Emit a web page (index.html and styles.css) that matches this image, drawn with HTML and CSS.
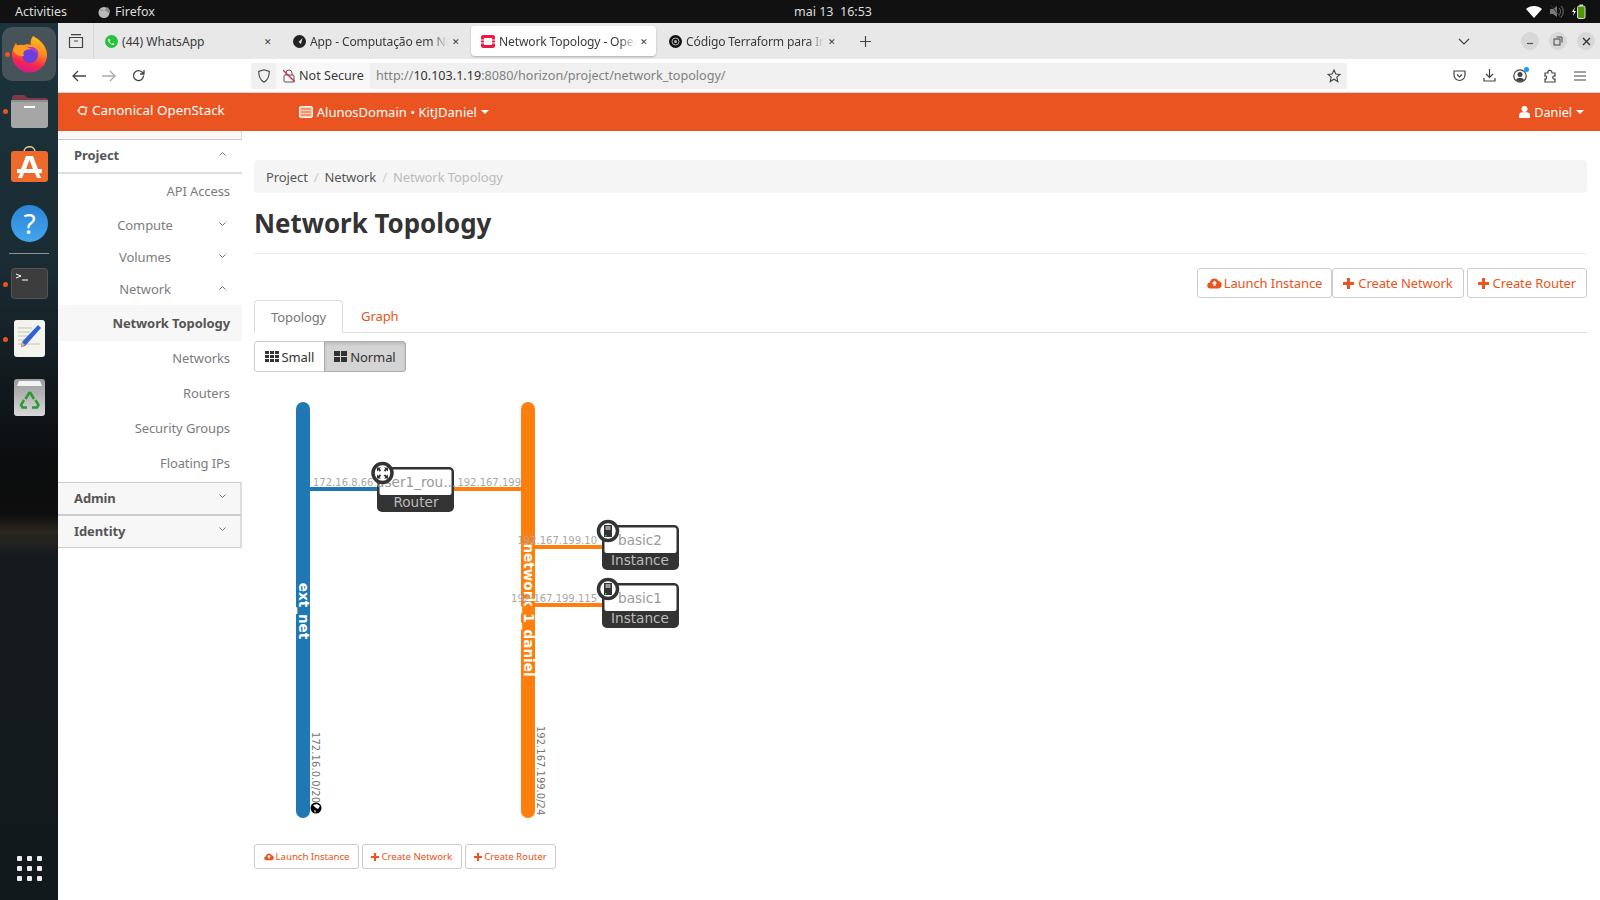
FILE: index.html
```html
<!DOCTYPE html>
<html>
<head>
<meta charset="utf-8">
<title>Network Topology - OpenStack Dashboard</title>
<link rel="stylesheet" href="styles.css">
</head>
<body>
<div class="topbar">
  <span class="activities">Activities</span>
  <span class="appname">
    <svg width="14" height="14" viewBox="0 0 14 14"><circle cx="7" cy="7.5" r="5.5" fill="#b9b9b9"/><path d="M3 3c1 2 3 3 5 2l2-3c2 1 3 3 3 5 0 1-1 1-2 1-1-2-3-3-5-2-2 0-3 0-3-3z" fill="#8d8d8d"/></svg>
    Firefox</span>
  <span class="clock">mai 13&nbsp;&nbsp;16:53</span>
  <span class="tray">
    <svg width="16" height="12" viewBox="0 0 16 12"><path d="M0 3C4-1 12-1 16 3L8 12z" fill="#fff"/></svg>
    <svg width="14" height="13" viewBox="0 0 14 13"><path d="M0 4h3l4-3v11L3 9H0z" fill="#777"/><path d="M9 3c2 2 2 5 0 7M11 1c3 3 3 8 0 11" fill="none" stroke="#777"/><path d="M1 0l10 13" stroke="#333"/></svg>
    <svg width="14" height="15" viewBox="0 0 14 15"><path d="M3 3L0 8h2l-1 4 3-5H2z" fill="#fff"/><rect x="5.500" y="2" width="7.500" height="12.500" rx="1.500" fill="#4e9a06" stroke="#ddd"/><rect x="7.500" y="0.500" width="3.500" height="1.500" fill="#ddd"/></svg>
  </span>
</div>

<div class="screen">
  <div class="dock">
    <div class="dock-item dock-active dot">
      <svg width="36" height="37" viewBox="0 0 36 37">
        <defs><linearGradient id="ffx" x1="0.700" y1="0" x2="0.400" y2="1"><stop offset="0" stop-color="#ffc21c"/><stop offset="0.400" stop-color="#ff8a1f"/><stop offset="0.750" stop-color="#f5274d"/><stop offset="1" stop-color="#d6188f"/></linearGradient></defs>
        <path d="M22 0C30 4 36 11 36 19A17.500 17.500 0 0 1 1 19C1 15 2 11 5 7C6 10 8 11 11 10C14 8 18 8 20 9C19 6 20 3 22 0z" fill="url(#ffx)"/>
        <circle cx="19" cy="19" r="8" fill="#6a3fdc"/>
        <path d="M12 15c3-4 8-5 12-3 3 2 4 4 3 7-2-4-7-6-11-5-2 0-3 1-4 1z" fill="#b33dc6"/>
        <path d="M2 14C5 8 10 8 14 10L20 13C14 13 11 16 13 20C8 21 4 18 2 14z" fill="#ff9a1f"/>
      </svg>
    </div>
    <div class="dock-item dock-files dot">
      <svg width="37" height="34" viewBox="0 0 37 34">
        <path d="M1 4c0-2 1-3 3-3h9l4 3h17c2 0 3 1 3 3v8H1z" fill="#7d3b4a"/>
        <rect x="0" y="6" width="37" height="28" rx="3" fill="#a6a6a6"/>
        <rect x="0" y="6" width="37" height="2" fill="#8e8e8e"/>
        <rect x="13" y="12" width="11" height="2" fill="#fff"/>
      </svg>
    </div>
    <div class="dock-item dock-store">
      <svg width="37" height="37" viewBox="0 0 37 37">
        <path d="M13 6c0-7 11-7 11 0" fill="none" stroke="#e8c9a0" stroke-width="1.500"/>
        <rect x="0" y="5" width="37" height="31" rx="3" fill="#ee6a2c"/>
        <path d="M15 10h7l5 13h4v4h-3l2 5h-4l-2-5H13l-2 5H7l2-5H6v-4h4zM18.500 14L15 23h7z" fill="#fff" fill-rule="evenodd"/>
      </svg>
    </div>
    <div class="dock-item dock-help">
      <svg width="37" height="37" viewBox="0 0 37 37">
        <defs><linearGradient id="hlp" x1="0" y1="0" x2="0" y2="1"><stop offset="0" stop-color="#2b84d6"/><stop offset="1" stop-color="#44a6ee"/></linearGradient></defs>
        <circle cx="18.500" cy="18.500" r="18.500" fill="url(#hlp)"/>
        <text x="18.500" y="29" text-anchor="middle" class="help-mark">?</text>
      </svg>
    </div>
    <div class="dock-sep"></div>
    <div class="dock-item dock-term dot">
      <svg width="37" height="31" viewBox="0 0 37 31">
        <rect x=".5" y=".5" width="36" height="30" rx="3" fill="#3d3d3d" stroke="#555"/>
        <path d="M5 6l5 2-5 2" fill="none" stroke="#fff"/><path d="M11 12h6" stroke="#fff"/>
      </svg>
    </div>
    <div class="dock-item dock-writer dot">
      <svg width="31" height="37" viewBox="0 0 31 37">
        <rect width="31" height="37" rx="3" fill="#f4f4ef"/>
        <path d="M4 8h14M4 12h12M4 16h10M4 20h8M4 24h22" stroke="#c2c2b0"/>
        <path d="M27 8L11 26l-4 1 1-5L24 5z" fill="#2f62d8"/>
        <path d="M7 27l1-5 3 3z" fill="#f0b070"/>
      </svg>
    </div>
    <div class="dock-item dock-trash">
      <svg width="31" height="37" viewBox="0 0 31 37">
        <defs><linearGradient id="bin" x1="0" y1="0" x2="0" y2="1"><stop offset="0" stop-color="#9a9a9a"/><stop offset="1" stop-color="#d8d8d8"/></linearGradient></defs>
        <rect width="31" height="37" rx="3" fill="url(#bin)"/>
        <path d="M3 7l2-5h21l2 5z" fill="#f3f3f3"/>
        <path d="M11.500 20l3.500-6h1.500l3.500 6M21.500 21l3 5-1.500 2.500H18M13 28.500H8.500L7 26l3-5" fill="none" stroke="#2a9a32" stroke-width="2.500"/>
      </svg>
    </div>
    <div class="dock-grid">
      <i></i><i></i><i></i><i></i><i></i><i></i><i></i><i></i><i></i>
    </div>
  </div>

  <div class="browser">
    <div class="tabstrip">
      <div class="tabs-view">
        <svg width="16" height="15" viewBox="0 0 16 15" fill="none" stroke="#444" stroke-width="1.200"><path d="M3 .7h10M1.500 3.500h13v10h-13zM6 7h4"/></svg>
      </div>
      <div class="tab tab-one">
        <svg width="13" height="13" viewBox="0 0 13 13"><circle cx="6.500" cy="6.500" r="6.500" fill="#25c13b"/><path d="M4 3.500l1.500 2-1 1c.5 1 1.500 2 2.500 2.500l1-1 1.500 1-.5 1c-3 0-6-3-6-5.500z" fill="#fff"/></svg>
        <span class="tab-label">(44) WhatsApp</span>
        <span class="tab-x">✕</span>
      </div>
      <div class="tab">
        <svg width="13" height="13" viewBox="0 0 13 13"><circle cx="6.500" cy="6.500" r="6.500" fill="#222"/><path d="M9.500 3L8 9 5.500 7z" fill="#ddd"/></svg>
        <span class="tab-label tab-fade">App - Computação em Nu</span>
        <span class="tab-x">✕</span>
      </div>
      <div class="tab tab-active">
        <svg width="14" height="13" viewBox="0 0 14 13"><path d="M0 2c0-1 1-2 2-2h10c1 0 2 1 2 2v9c0 1-1 2-2 2H2c-1 0-2-1-2-2z" fill="#ed1944"/><rect x="3" y="3" width="8" height="7" fill="#fff"/><path d="M0 5h3M0 8h3M11 5h3M11 8h3" stroke="#fff"/></svg>
        <span class="tab-label tab-fade">Network Topology - Oper</span>
        <span class="tab-x">✕</span>
      </div>
      <div class="tab">
        <svg width="13" height="13" viewBox="0 0 13 13"><circle cx="6.500" cy="6.500" r="6.500" fill="#111"/><circle cx="6.500" cy="6.500" r="3.500" fill="none" stroke="#bbb"/><circle cx="6.500" cy="6.500" r="1.500" fill="#bbb"/></svg>
        <span class="tab-label tab-fade">Código Terraform para In</span>
        <span class="tab-x">✕</span>
      </div>
      <div class="tab-plus">
        <svg width="11" height="11" viewBox="0 0 11 11"><path d="M5.500 0v11M0 5.500h11" stroke="#444" stroke-width="1.200"/></svg>
      </div>
      <div class="strip-right">
        <svg class="tab-list" width="12" height="7" viewBox="0 0 12 7"><path d="M1 1l5 5 5-5" fill="none" stroke="#444" stroke-width="1.200"/></svg>
        <span class="win-btn"><svg width="8" height="8" viewBox="0 0 8 8"><path d="M1 6.500h6" stroke="#555" stroke-width="1.200"/></svg></span>
        <span class="win-btn"><svg width="10" height="10" viewBox="0 0 10 10" fill="none" stroke="#444"><rect x="1" y="3" width="6" height="6"/><path d="M3.500 1h5.500v5.500"/></svg></span>
        <span class="win-btn"><svg width="9" height="9" viewBox="0 0 9 9"><path d="M1 1l7 7M8 1l-7 7" stroke="#333" stroke-width="1.400"/></svg></span>
      </div>
    </div>

    <div class="toolbar">
      <div class="nav-btns">
        <svg width="14" height="12" viewBox="0 0 14 12" fill="none" stroke="#444" stroke-width="1.300"><path d="M6 1L1 6l5 5M1 6h13"/></svg>
        <svg width="14" height="12" viewBox="0 0 14 12" fill="none" stroke="#aaa" stroke-width="1.300"><path d="M8 1l5 5-5 5M13 6H0"/></svg>
        <svg width="13" height="13" viewBox="0 0 13 13" fill="none" stroke="#444" stroke-width="1.300"><path d="M11.500 6.500a5 5 0 1 1-1.500-3.500L12 5M12 1v4H8"/></svg>
      </div>
      <div class="urlbar">
        <svg class="shield" width="12" height="14" viewBox="0 0 12 14" fill="none" stroke="#444" stroke-width="1.100"><path d="M6 .8L11.300 2.500c0 5-1.500 8.500-5.300 10.800C2.200 11 .7 7.500.7 2.500z"/></svg>
        <div class="secure">
          <svg width="12" height="14" viewBox="0 0 12 14"><rect x="1" y="6" width="10" height="7" rx="1" fill="none" stroke="#555"/><path d="M3 6V4a3 3 0 0 1 6 0v2" fill="none" stroke="#555"/><path d="M0 1l12 12" stroke="#e22850" stroke-width="1.300"/></svg>
          <span>Not Secure</span>
        </div>
        <div class="url"><span class="url-dim">http://</span><span class="url-host">10.103.1.19</span><span class="url-dim">:8080/horizon/project/network_topology/</span></div>
        <svg class="star" width="14" height="14" viewBox="0 0 14 14"><path d="M7 1l1.800 4 4.200.4-3.200 2.800 1 4.300L7 10.200 3.200 12.500l1-4.300L1 5.400 5.200 5z" fill="none" stroke="#444" stroke-width="1.100"/></svg>
      </div>
      <div class="tool-icons">
        <svg width="13" height="12" viewBox="0 0 13 12" fill="none" stroke="#444" stroke-width="1.200"><path d="M1 1h11v4a5.500 5.500 0 0 1-11 0zM4 4.500l2.500 2.500L9 4.500"/></svg>
        <svg width="13" height="13" viewBox="0 0 13 13" fill="none" stroke="#444" stroke-width="1.200"><path d="M6.500 0v8M3 5l3.500 3.500L10 5M1 9v3h11V9"/></svg>
        <span class="account">
          <svg width="14" height="14" viewBox="0 0 14 14"><circle cx="7" cy="7" r="6.200" fill="none" stroke="#444" stroke-width="1.200"/><circle cx="7" cy="5.500" r="2.500" fill="#444"/><path d="M3 11c1-3 7-3 8 0-2 2-6 2-8 0z" fill="#444"/></svg>
        </span>
        <svg width="13" height="14" viewBox="0 0 13 14" fill="none" stroke="#444" stroke-width="1.200"><path d="M1 4h3c-1-3 4-4 4 0h3v3c-3-1-3 4 0 3v3H1V10c2 1 2-4 0-3z"/></svg>
        <svg width="12" height="10" viewBox="0 0 12 10"><path d="M0 1h12M0 5h12M0 9h12" stroke="#444" stroke-width="1.200"/></svg>
      </div>
    </div>

    <div class="navbar">
      <a class="brand"><svg width="11" height="11" viewBox="0 0 11 11"><circle cx="5.500" cy="5.500" r="3.700" fill="none" stroke="#fff" stroke-width="1.400"/><circle cx="9.200" cy="2.700" r="1.300" fill="#fff" stroke="#e95420" stroke-width=".5"/><circle cx="1.500" cy="5.500" r="1.300" fill="#fff" stroke="#e95420" stroke-width=".5"/><circle cx="8" cy="9.300" r="1.300" fill="#fff" stroke="#e95420" stroke-width=".5"/></svg> Canonical OpenStack</a>
      <a class="project-pick">
        <svg width="14" height="12" viewBox="0 0 14 12"><rect x=".5" y=".5" width="13" height="11" rx="1.500" fill="#fbcdb5" stroke="#fff"/><path d="M2 3h10M2 6h10M2 9h10" stroke="#ee5a24"/></svg>
        AlunosDomain • KitJDaniel <span class="caret"></span></a>
      <a class="user-menu">
        <svg width="11" height="12" viewBox="0 0 11 12"><circle cx="5.500" cy="3" r="3" fill="#fff"/><path d="M0 12V9c0-2 2-3 5.500-3S11 7 11 9v3z" fill="#fff"/></svg>
        Daniel <span class="caret"></span></a>
    </div>

    <div class="page">
      <div class="sidebar">
        <div class="side-top"></div>
        <div class="side-head side-open">Project <svg class="chev" width="7" height="4" viewBox="0 0 7 4"><path d="M.5 3.500l3-3 3 3" fill="none" stroke="#777"/></svg></div>
        <a class="side-link side-api">API Access</a>
        <a class="side-group">Compute <svg class="chev" width="7" height="4" viewBox="0 0 7 4"><path d="M.5.500l3 3 3-3" fill="none" stroke="#777"/></svg></a>
        <a class="side-group">Volumes <svg class="chev" width="7" height="4" viewBox="0 0 7 4"><path d="M.5.500l3 3 3-3" fill="none" stroke="#777"/></svg></a>
        <a class="side-group">Network <svg class="chev" width="7" height="4" viewBox="0 0 7 4"><path d="M.5 3.500l3-3 3 3" fill="none" stroke="#777"/></svg></a>
        <a class="side-link side-current">Network Topology</a>
        <a class="side-link">Networks</a>
        <a class="side-link">Routers</a>
        <a class="side-link">Security Groups</a>
        <a class="side-link">Floating IPs</a>
        <div class="side-head side-closed">Admin <svg class="chev" width="7" height="4" viewBox="0 0 7 4"><path d="M.5.500l3 3 3-3" fill="none" stroke="#777"/></svg></div>
        <div class="side-head side-closed">Identity <svg class="chev" width="7" height="4" viewBox="0 0 7 4"><path d="M.5.500l3 3 3-3" fill="none" stroke="#777"/></svg></div>
      </div>

      <div class="content">
        <div class="crumbs"><a>Project</a><i>/</i><a>Network</a><i>/</i><span>Network Topology</span></div>
        <h1 class="title">Network Topology</h1>
        <div class="actions">
          <a class="btn btn-launch"><svg class="ic" width="15" height="12" viewBox="0 0 15 12"><path d="M3.500 11.500a3 3 0 0 1-.5-6A4.500 4.500 0 0 1 11.500 4a3.800 3.800 0 0 1 0 7.500z" fill="#e95420"/><path d="M7.500 3.500L4.800 6.500h1.700V9h2V6.500h1.700z" fill="#fff"/></svg> Launch Instance</a>
          <a class="btn btn-net"><svg class="ic" width="11" height="11" viewBox="0 0 11 11"><path d="M5.500 0v11M0 5.500h11" stroke="#e95420" stroke-width="3"/></svg> Create Network</a>
          <a class="btn"><svg class="ic" width="11" height="11" viewBox="0 0 11 11"><path d="M5.500 0v11M0 5.500h11" stroke="#e95420" stroke-width="3"/></svg> Create Router</a>
        </div>
        <div class="tabs-row">
          <a class="page-tab page-tab-on">Topology</a>
          <a class="page-tab page-tab-off">Graph</a>
        </div>
        <div class="toggle">
          <a class="tog"><svg width="14" height="11" viewBox="0 0 14 11" fill="#333"><path d="M0 0h4v3H0zM5 0h4v3H5zM10 0h4v3h-4zM0 4h4v3H0zM5 4h4v3H5zM10 4h4v3h-4zM0 8h4v3H0zM5 8h4v3H5zM10 8h4v3h-4z"/></svg> Small</a>
          <a class="tog tog-on"><svg width="13" height="11" viewBox="0 0 13 11" fill="#333"><path d="M0 0h6v5H0zM7 0h6v5H7zM0 6h6v5H0zM7 6h6v5H7z"/></svg> Normal</a>
        </div>

        <svg class="topology" width="500" height="440" viewBox="254 396 500 440">
          <rect x="296" y="402" width="14" height="416" rx="7" fill="#1f77b4"/>
          <rect x="521" y="402" width="14" height="416" rx="7" fill="#ff7f0e"/>
          <path d="M310 489h70" stroke="#1f77b4" stroke-width="4"/>
          <path d="M450 489h71M535 547h70M535 605h70" stroke="#ff7f0e" stroke-width="4"/>

          <text class="net-name" transform="translate(298.500 611) rotate(90)" text-anchor="middle">ext_net</text>
          <text class="net-name" transform="translate(523.500 610) rotate(90)" text-anchor="middle">network_1_daniel</text>
          <text class="net-cidr" transform="translate(312 732) rotate(90)" textLength="71">172.16.0.0/20</text>
          <text class="net-cidr" transform="translate(537 726) rotate(90)">192.167.199.0/24</text>
          <circle cx="316" cy="808" r="5.500" fill="#000"/>
          <path d="M313 805l4-1 3 2-2 3-2-1zM314 810l2 1-1 2z" fill="#fff"/>

          <text class="port-ip" x="313" y="486">172.16.8.66</text>
          <text class="port-ip" x="521" y="486" text-anchor="end">192.167.199</text>
          <text class="port-ip" x="597" y="544" text-anchor="end">192.167.199.10</text>
          <text class="port-ip" x="597" y="602" text-anchor="end">192.167.199.115</text>

          <rect x="377" y="467" width="77" height="45" rx="5" fill="#333"/>
          <rect x="379.500" y="469.500" width="72" height="25.500" rx="2" fill="#fff"/>
          <text class="node-name" x="416" y="487" text-anchor="middle">user1_rou...</text>
          <text class="node-type" x="416" y="507" text-anchor="middle">Router</text>
          <circle cx="382.500" cy="473" r="9.500" fill="#fff" stroke="#333" stroke-width="3.500"/>
          <path d="M380.500 471l-2-2M384.500 471l2-2M380.500 475l-2 2M384.500 475l2 2" stroke="#333" stroke-width="1.800"/>
          <path d="M377 467.500h4l-4 4zM388 467.500h-4l4 4zM377 478.500h4l-4-4zM388 478.500h-4l4-4z" fill="#333"/>

          <rect x="602" y="525" width="77" height="45" rx="5" fill="#333"/>
          <rect x="604.500" y="527.500" width="72" height="25.500" rx="2" fill="#fff"/>
          <text class="node-name" x="640" y="545" text-anchor="middle">basic2</text>
          <text class="node-type" x="640" y="565" text-anchor="middle">Instance</text>
          <circle cx="608" cy="531" r="9.500" fill="#fff" stroke="#333" stroke-width="3.500"/>
          <rect x="604" y="525" width="8" height="12" fill="#333"/>
          <path d="M605.500 527h5M605.500 529h5" stroke="#fff"/>
          <rect x="605" y="535" width="1.500" height="1.500" fill="#3c3"/>

          <rect x="602" y="583" width="77" height="45" rx="5" fill="#333"/>
          <rect x="604.500" y="585.500" width="72" height="25.500" rx="2" fill="#fff"/>
          <text class="node-name" x="640" y="603" text-anchor="middle">basic1</text>
          <text class="node-type" x="640" y="623" text-anchor="middle">Instance</text>
          <circle cx="608" cy="589" r="9.500" fill="#fff" stroke="#333" stroke-width="3.500"/>
          <rect x="604" y="583" width="8" height="12" fill="#333"/>
          <path d="M605.500 585h5M605.500 587h5" stroke="#fff"/>
          <rect x="605" y="593" width="1.500" height="1.500" fill="#3c3"/>
        </svg>

        <div class="actions-low">
          <a class="btn btn-sm"><svg class="ic" width="10" height="9" viewBox="0 0 15 12"><path d="M3.500 11.500a3 3 0 0 1-.5-6A4.500 4.500 0 0 1 11.500 4a3.800 3.800 0 0 1 0 7.500z" fill="#e95420"/><path d="M7.500 3.500L4.800 6.500h1.700V9h2V6.500h1.700z" fill="#fff"/></svg> Launch Instance</a>
          <a class="btn btn-sm"><svg class="ic" width="8" height="8" viewBox="0 0 11 11"><path d="M5.500 0v11M0 5.500h11" stroke="#e95420" stroke-width="3"/></svg> Create Network</a>
          <a class="btn btn-sm"><svg class="ic" width="8" height="8" viewBox="0 0 11 11"><path d="M5.500 0v11M0 5.500h11" stroke="#e95420" stroke-width="3"/></svg> Create Router</a>
        </div>
      </div>
    </div>
  </div>
</div>
</body>
</html>
```

FILE: styles.css
```css
* {
    box-sizing: border-box;
}
html, body {
    margin: 0;
    padding: 0;
    height: 100%;
    overflow: hidden;
}
body {
    width: 1600px;
    height: 900px;
    display: flex;
    flex-direction: column;
    background: #fff;
    font-family: "Noto Sans", "Open Sans", sans-serif;
    color: #333;
}

/* desktop top bar */
.topbar {
    height: 23px;
    flex: none;
    background: #111;
    color: #ddd;
    font-size: 12.5px;
    display: flex;
    align-items: center;
    padding-left: 15px;
    position: relative;
}
.appname {
    margin-left: 30px;
    display: flex;
    align-items: center;
    gap: 4px;
}
.clock {
    position: absolute;
    left: 794px;
    top: 3px;
}
.tray {
    margin-left: auto;
    margin-right: 14px;
    display: flex;
    align-items: center;
    gap: 8px;
}

.screen {
    flex: 1;
    display: flex;
    min-height: 0;
}

/* dock */
.dock {
    width: 58px;
    flex: none;
    background: linear-gradient(180deg, #1c333c 0%, #1a2b33 28%, #0c0d0e 50%, #0e0e0e 56%, #2a2620 58%, #141a1e 61%, #12191d 100%);
    display: flex;
    flex-direction: column;
    align-items: center;
    position: relative;
    padding-top: 4px;
}
.dock-item {
    position: relative;
    display: flex;
    justify-content: center;
    align-items: center;
}
.dock-active {
    width: 54px;
    height: 54px;
    background: #46545a;
    border-radius: 10px;
}
.dot::before {
    content: "";
    position: absolute;
    left: 3px;
    top: 50%;
    width: 5px;
    height: 5px;
    margin-top: -2px;
    border-radius: 50%;
    background: #e95420;
}
.dock-files { margin-top: 13px; }
.dock-store { margin-top: 18px; }
.dock-help { margin-top: 22px; }
.dock-sep {
    width: 40px;
    height: 1px;
    background: #8b9498;
    margin-top: 11px;
}
.dock-term { margin-top: 14px; }
.dock-writer { margin-top: 21px; }
.dock-trash { margin-top: 22px; }
.dock-term.dot::before { left: -8px; }
.dock-files.dot::before { left: -8px; }
.dock-writer.dot::before { left: -11px; }
.help-mark {
    font-size: 28px;
    fill: #fff;
    font-family: "Noto Sans", sans-serif;
}
.dock-grid {
    margin-top: auto;
    margin-bottom: 19px;
    display: grid;
    grid-template-columns: repeat(3, 5px);
    gap: 5px;
}
.dock-grid i {
    width: 5px;
    height: 5px;
    background: #eee;
    border-radius: 1px;
}

.browser {
    flex: 1;
    min-width: 0;
    display: flex;
    flex-direction: column;
}

/* tab strip */
.tabstrip {
    height: 36px;
    flex: none;
    background: #e8e8e8;
    display: flex;
    align-items: center;
    font-size: 12.1px;
    color: #3a3a3a;
}
.tabs-view {
    width: 36px;
    height: 36px;
    border-right: 1px solid #d2d2d2;
    display: flex;
    align-items: center;
    justify-content: center;
}
.tab {
    width: 185px;
    height: 30px;
    margin-left: 3px;
    padding: 0 8px 0 10px;
    display: flex;
    align-items: center;
    gap: 4px;
    border-radius: 4px;
}
.tab-one {
    margin-left: 1px;
}
.tab-active {
    background: #fff;
    box-shadow: 0 1px 2px rgba(0, 0, 0, 0.25);
}
.tab-label {
    flex: 1;
    min-width: 0;
    white-space: nowrap;
}
.tab-fade {
    letter-spacing: -0.15px;
    -webkit-mask-image: linear-gradient(90deg, #000 88%, transparent 100%);
    mask-image: linear-gradient(90deg, #000 88%, transparent 100%);
}
.tab-x {
    font-size: 9px;
}
.tab-plus {
    margin-left: 6px;
    width: 30px;
    display: flex;
    justify-content: center;
}
.strip-right {
    margin-left: auto;
    display: flex;
    align-items: center;
    padding-right: 5px;
}
.tab-list {
    margin-right: 41px;
}
.win-btn {
    width: 18px;
    height: 18px;
    border-radius: 50%;
    background: #d8d8d8;
    margin-left: 10px;
    display: flex;
    align-items: center;
    justify-content: center;
}

/* toolbar */
.toolbar {
    height: 34px;
    flex: none;
    background: #fff;
    border-bottom: 1px solid #d4d4d4;
    display: flex;
    align-items: center;
}
.nav-btns {
    width: 193px;
    padding-left: 14px;
    display: flex;
    align-items: center;
    gap: 16px;
}
.urlbar {
    width: 1096px;
    height: 26px;
    background: #f0f0f0;
    border-radius: 3px;
    display: flex;
    align-items: center;
    padding-left: 7px;
    font-size: 12.6px;
}
.secure {
    margin-left: 6px;
    width: 94px;
    height: 26px;
    background: #f8f8f8;
    display: flex;
    align-items: center;
    gap: 4px;
    padding-left: 7px;
    color: #3a3a3a;
}
.url {
    margin-left: 6px;
    flex: 1;
}
.url-dim {
    color: #808080;
}
.url-host {
    color: #333;
}
.star {
    margin-right: 6px;
}
.tool-icons {
    margin-left: 106px;
    display: flex;
    align-items: center;
    gap: 17px;
}
.account {
    position: relative;
    display: flex;
}
.account::after {
    content: "";
    position: absolute;
    right: -2px;
    top: -2px;
    width: 5px;
    height: 5px;
    border-radius: 50%;
    background: #0a9dff;
}

/* orange bar */
.navbar {
    height: 38px;
    flex: none;
    background: #e95420;
    color: #fff;
    font-size: 13px;
    display: flex;
    align-items: center;
}
.brand {
    margin-left: 19px;
    margin-top: -4px;
    font-size: 13.4px;
    display: flex;
    align-items: center;
    gap: 4px;
}
.project-pick {
    margin-left: 74px;
    display: flex;
    align-items: center;
    gap: 4px;
}
.user-menu {
    margin-left: auto;
    margin-right: 16px;
    font-size: 12.6px;
    display: flex;
    align-items: center;
    gap: 4px;
}
.caret {
    width: 0;
    height: 0;
    border-left: 4px solid transparent;
    border-right: 4px solid transparent;
    border-top: 4px solid #fff;
}

.page {
    flex: 1;
    display: flex;
    min-height: 0;
    background: #fff;
}

/* sidebar */
.sidebar {
    width: 184px;
    flex: none;
    font-size: 13px;
    letter-spacing: -0.1px;
    color: #7d7d7d;
}
.side-top {
    height: 9px;
    border-bottom: 1px solid #c8c8c8;
    border-right: 1px solid #ddd;
    background: #f8f8f8;
}
.side-head {
    display: flex;
    align-items: center;
    padding-left: 16px;
    font-weight: 700;
    color: #555;
    position: relative;
}
.side-open {
    height: 34px;
    padding-bottom: 2px;
    border-bottom: 2px solid #ddd;
}
.side-closed {
    height: 33px;
    padding-bottom: 2px;
    background: #f7f7f7;
    border: 1px solid #ccc;
    border-left: 0;
    border-right: 2px solid #ddd;
}
.side-link + .side-closed {
    margin-top: 1px;
}
.chev {
    position: absolute;
    right: 16px;
    top: 12px;
}
.side-closed .chev {
    right: 14px;
    top: 11px;
}
.side-link, .side-group {
    display: block;
    position: relative;
    text-align: right;
    padding-right: 12px;
}
.side-link {
    height: 35px;
    line-height: 35px;
}
.side-group {
    height: 32px;
    line-height: 32px;
    text-align: center;
    padding-right: 10px;
}
.side-group .chev {
    top: 13px;
}
.side-current {
    background: #f7f7f7;
    font-weight: 700;
    color: #555;
    height: 36px;
    line-height: 36px;
}

/* main content */
.content {
    flex: 1;
    min-width: 0;
    padding: 29px 13px 0 12px;
    font-size: 13px;
    letter-spacing: -0.1px;
}
.crumbs {
    height: 33px;
    background: #f5f5f5;
    border-radius: 4px;
    display: flex;
    align-items: center;
    padding-left: 12px;
    color: #555;
}
.crumbs i {
    font-style: normal;
    color: #ccc;
    margin: 0 6px;
}
.crumbs span {
    color: #bbb;
}
.title {
    margin: 0;
    height: 61px;
    line-height: 52px;
    font-size: 25.9px;
    letter-spacing: 0;
    font-weight: 700;
    color: #333;
    border-bottom: 1px solid #eee;
    padding-top: 4px;
}
.actions {
    display: flex;
    justify-content: flex-end;
    gap: 3px;
    margin-top: 14px;
}
.btn {
    height: 30px;
    background: #fff;
    border: 1px solid #ccc;
    border-radius: 3px;
    color: #e95420;
    font-size: 13px;
    display: flex;
    align-items: center;
    padding: 0 10px;
    gap: 4px;
}
.btn-launch {
    margin-right: -3px;
    padding: 0 9px;
    gap: 2px;
}
.tabs-row {
    display: flex;
    height: 33px;
    margin-top: 2px;
    border-bottom: 1px solid #ddd;
}
.page-tab {
    padding: 0 16px;
    line-height: 32px;
    color: #e95420;
    height: 33px;
}
.page-tab-off {
    margin-left: 2px;
}
.page-tab-on {
    background: #fff;
    color: #777;
    border: 1px solid #ddd;
    border-bottom-color: #fff;
    border-radius: 4px 4px 0 0;
}
.toggle {
    display: flex;
    margin-top: 8px;
}
.tog {
    height: 31px;
    padding: 0 9.5px;
    display: flex;
    align-items: center;
    gap: 3px;
    border: 1px solid #ccc;
    border-radius: 3px 0 0 3px;
    color: #333;
}
.tog-on {
    background: #d4d4d4;
    border-color: #adadad;
    border-radius: 0 3px 3px 0;
    box-shadow: inset 0 2px 3px rgba(0, 0, 0, 0.12);
    margin-left: -1px;
}
.topology {
    display: block;
    margin-top: 24px;
}
.net-name {
    font: 700 13.6px "DejaVu Sans", sans-serif;
    letter-spacing: 0;
    fill: #fff;
}
.net-cidr, .port-ip {
    font: 10px "DejaVu Sans", sans-serif;
    letter-spacing: 0;
    fill: #a8a8a8;
}
.net-cidr {
    fill: #777;
}
.node-name, .node-type {
    font: 13.6px "DejaVu Sans", sans-serif;
    letter-spacing: 0;
}
.node-name {
    fill: #999;
}
.node-type {
    fill: #bbb;
}
.actions-low {
    display: flex;
    gap: 3px;
    margin-top: 8px;
}
.btn-sm {
    height: 25px;
    font-size: 9.8px;
    padding: 0 8.5px;
    gap: 2px;
}
```
